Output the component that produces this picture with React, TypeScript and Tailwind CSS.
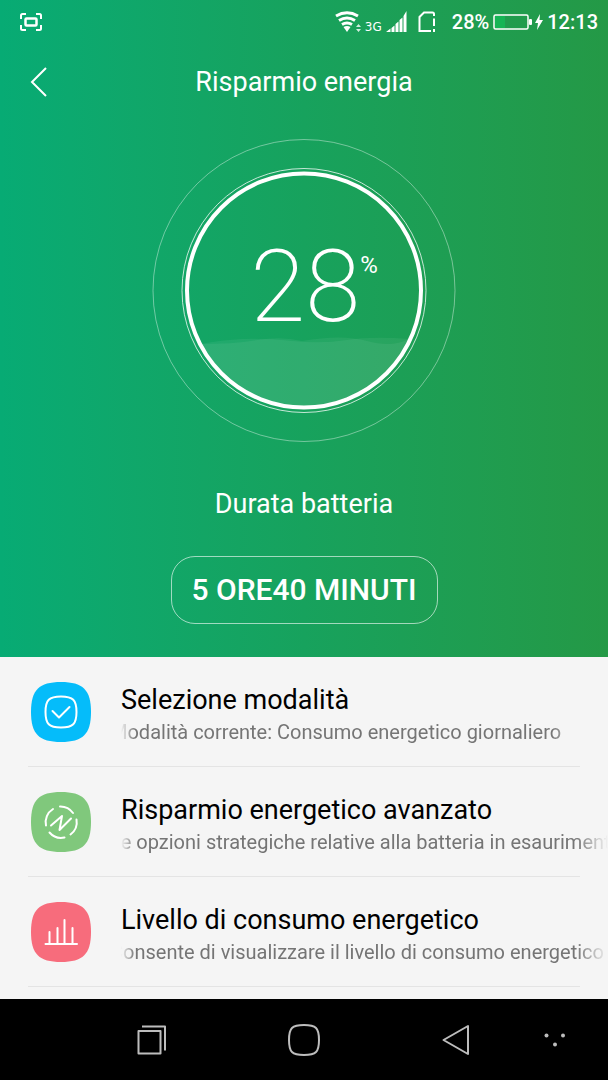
import React from 'react';

const SQUIRCLE = 'M30 0C52 0 60 8 60 30C60 52 52 60 30 60C8 60 0 52 0 30C0 8 8 0 30 0Z';

const options = [
  {
    title: 'Selezione modalità',
    detail: 'Modalità corrente: Consumo energetico giornaliero',
    color: 'text-[#05bcfa]',
    fade: 'mr-6',
    icon: (
      <>
        <path d="M30 14.500C42 14.500 45.500 18 45.500 30C45.500 42 42 45.500 30 45.500C18 45.500 14.500 42 14.500 30C14.500 18 18 14.500 30 14.500Z" />
        <path d="M21.500 29L28 35.500L38.500 25" />
      </>
    ),
  },
  {
    title: 'Risparmio energetico avanzato',
    detail: 'Le opzioni strategiche relative alla batteria in esaurimento',
    color: 'text-[#80c87c]',
    fade: '',
    icon: (
      <>
        <path d="M29 14.500A15.500 15.500 0 0 1 42 21M45.500 27.500A15.500 15.500 0 0 1 39.500 42.500M33.500 45.500A15.500 15.500 0 0 1 18.500 40.500M15 33.500A15.500 15.500 0 0 1 22 17" />
        <path d="M20 33.500L31 24L28.500 38L40 26.500" />
      </>
    ),
  },
  {
    title: 'Livello di consumo energetico',
    detail: 'Consente di visualizzare il livello di consumo energetico',
    color: 'text-[#f76c7c]',
    fade: '',
    icon: <path d="M14.500 42H46M18.500 42V30M26.500 42V26M33.500 42V18M41.500 42V26" />,
  },
];

const StatusBar: React.FC = () => (
  <div className="flex h-11 items-center justify-between pl-5 pr-[10px] text-xl font-medium">
    <svg className="h-[18px] w-[22px]" viewBox="0 0 22 18" fill="none" stroke="currentColor" strokeWidth="2">
      <path d="M1 6V2.500Q1 1 2.500 1H6M16 1H19.500Q21 1 21 2.500V6M21 12V15.500Q21 17 19.500 17H16M6 17H2.500Q1 17 1 15.500V12" />
      <rect x="5.500" y="5.500" width="11" height="7" rx="1" strokeWidth="2.500" />
    </svg>
    <div className="flex items-center">
      <svg className="h-[22px] w-[26px]" viewBox="0 0 26 22" fill="none" stroke="currentColor" strokeWidth="3">
        <path d="M1 5Q12 -1.500 23 5M4 9.500Q12 4.500 20 9.500M7 13.500Q12 10.500 17 13.500" />
        <path d="M8.500 16Q12 14 15.500 16L12 21Z" fill="currentColor" stroke="none" />
        <path d="M21 16L23.500 13L26 16ZM21 18L23.500 21L26 18Z" fill="currentColor" stroke="none" opacity="0.8" />
      </svg>
      <span className="ml-1 pt-[9px] font-['DejaVu_Sans'] text-xs leading-3 font-normal">3G</span>
      <svg className="ml-1 h-[22px] w-[21px]" viewBox="0 0 21 22" fill="currentColor">
        <path d="M0 21L4.500 17.500V21ZM5.500 17L8.500 14.500V21H5.500ZM9.500 13L12.500 10.500V21H9.500ZM13.500 9L16.500 6.500V21H13.500ZM17.500 5L20.500 0V21H17.500Z" />
      </svg>
      <svg className="ml-[11px] h-[22px] w-[18px]" viewBox="0 0 18 22" fill="none" stroke="currentColor" strokeWidth="2">
        <path d="M13 20H1.500V6L6 1.500H14.500Q16 1.500 16 3V5M16 7.500V15M16 18V21" />
      </svg>
      <span className="ml-4">28%</span>
      <svg className="ml-1 h-4 w-[39px]" viewBox="0 0 39 16" fill="none">
        <rect x="2" y="2" width="10" height="12" fill="#16b455" />
        <rect x="1" y="1" width="34" height="14" rx="1.500" stroke="currentColor" strokeWidth="1.500" />
        <rect x="36" y="5" width="3" height="6" rx="1" fill="currentColor" />
      </svg>
      <svg className="ml-[3px] h-4 w-2" viewBox="0 0 8 16" fill="currentColor">
        <path d="M5 0L0 9H3L2 16L8 6H4.500Z" />
      </svg>
      <span className="ml-1">12:13</span>
    </div>
  </div>
);

const BatteryGauge: React.FC = () => (
  <div className="mt-[18px] grid place-items-center">
    <svg className="col-start-1 row-start-1 h-[305px] w-[304px]" viewBox="0 0 304 305" fill="none" stroke="white">
      <g fill="white" stroke="none" fillOpacity="0.06">
        <path d="M48 206Q70 202 90 201T140 203T195 202T257 201A117 117 0 0 1 48 206Z" />
        <path d="M48 206Q80 206 105 202T150 203Q190 196 215 203T257 201A117 117 0 0 1 48 206Z" />
      </g>
      <circle cx="152" cy="152.500" r="151" strokeOpacity="0.4" />
      <circle cx="152" cy="152.500" r="122" strokeOpacity="0.75" />
      <circle cx="152" cy="152.500" r="117" strokeWidth="4" />
    </svg>
    <div className="col-start-1 row-start-1 flex items-start pb-2 pl-5">
      <span className="text-[100px] leading-[108px] font-extralight">28</span>
      <span className="pt-4 text-2xl">%</span>
    </div>
  </div>
);

const NavBar: React.FC = () => (
  <nav className="mt-auto grid h-[81px] grid-cols-8 items-center bg-black text-[#bdbdbd]">
    <button aria-label="App recenti" className="col-span-2 col-start-2 justify-self-center">
      <svg className="h-[30px] w-[30px]" viewBox="0 0 30 30" fill="none" stroke="currentColor" strokeWidth="2" strokeLinejoin="round">
        <rect x="1.500" y="6" width="22" height="22.500" />
        <path d="M5 1.500H28V25.500" />
      </svg>
    </button>
    <button aria-label="Home" className="col-span-2 justify-self-center">
      <svg className="h-8 w-8" viewBox="0 0 32 32" fill="none" stroke="currentColor" strokeWidth="2">
        <path d="M16 1C28 1 31 4 31 16C31 28 28 31 16 31C4 31 1 28 1 16C1 4 4 1 16 1Z" />
      </svg>
    </button>
    <button aria-label="Indietro" className="col-span-2 justify-self-center">
      <svg className="h-8 w-7" viewBox="0 0 28 32" fill="none" stroke="currentColor" strokeWidth="2" strokeLinejoin="round">
        <path d="M26 2V30L1.500 16Z" />
      </svg>
    </button>
    <button aria-label="Altro" className="ml-3 justify-self-start">
      <svg className="h-[14px] w-[22px]" viewBox="0 0 22 14" fill="currentColor">
        <circle cx="2.500" cy="2.500" r="2" />
        <circle cx="19" cy="2.500" r="2" />
        <circle cx="11" cy="11.500" r="2" />
      </svg>
    </button>
  </nav>
);

export default function App() {
  return (
    <div className="flex min-h-screen flex-col bg-[#f5f5f5] font-['Roboto',sans-serif]">
      <header className="bg-linear-to-r from-[#07ab74] via-[#17a25d] to-[#249946] pb-[33px] text-white">
        <StatusBar />
        <div className="grid h-[76px] grid-cols-[1fr_auto_1fr] items-center">
          <button aria-label="Indietro" className="ml-[30px] justify-self-start">
            <svg className="h-[30px] w-[18px]" viewBox="0 0 18 30" fill="none" stroke="currentColor" strokeWidth="2">
              <path d="M16 1L2 15L16 29" />
            </svg>
          </button>
          <h1 className="text-[27px] leading-8">Risparmio energia</h1>
        </div>
        <BatteryGauge />
        <div className="mt-[45px] flex flex-col items-center gap-9">
          <p className="text-[27px] leading-8">Durata batteria</p>
          <p className="rounded-3xl border border-white/60 px-5 py-[15px] text-[30px] leading-9 font-medium">5 ORE40 MINUTI</p>
        </div>
      </header>

      <main className="overflow-hidden pb-3">
        <ul>
          {options.map((option) => (
            <li key={option.title}>
              <a href="#" className="flex h-[109px] items-center gap-[30px] pl-[31px]">
                <svg className={`h-[60px] w-[60px] shrink-0 ${option.color}`} viewBox="0 0 60 60">
                  <path d={SQUIRCLE} fill="currentColor" />
                  <g fill="none" stroke="white" strokeWidth="2" strokeLinecap="round" strokeLinejoin="round">
                    {option.icon}
                  </g>
                </svg>
                <div className="min-w-0 flex-1 pt-1">
                  <h2 className="text-[27px] leading-9 text-black">{option.title}</h2>
                  <div className={`overflow-hidden mask-[linear-gradient(to_right,transparent,black_14px,black_calc(100%-32px),transparent)] ${option.fade}`}>
                    <p className="-ml-[11px] text-xl leading-7 whitespace-nowrap text-[#757575]">{option.detail}</p>
                  </div>
                </div>
              </a>
              <div className="mx-7 h-px bg-[#e4e4e4]" />
            </li>
          ))}
        </ul>
      </main>
      <NavBar />
    </div>
  );
}
